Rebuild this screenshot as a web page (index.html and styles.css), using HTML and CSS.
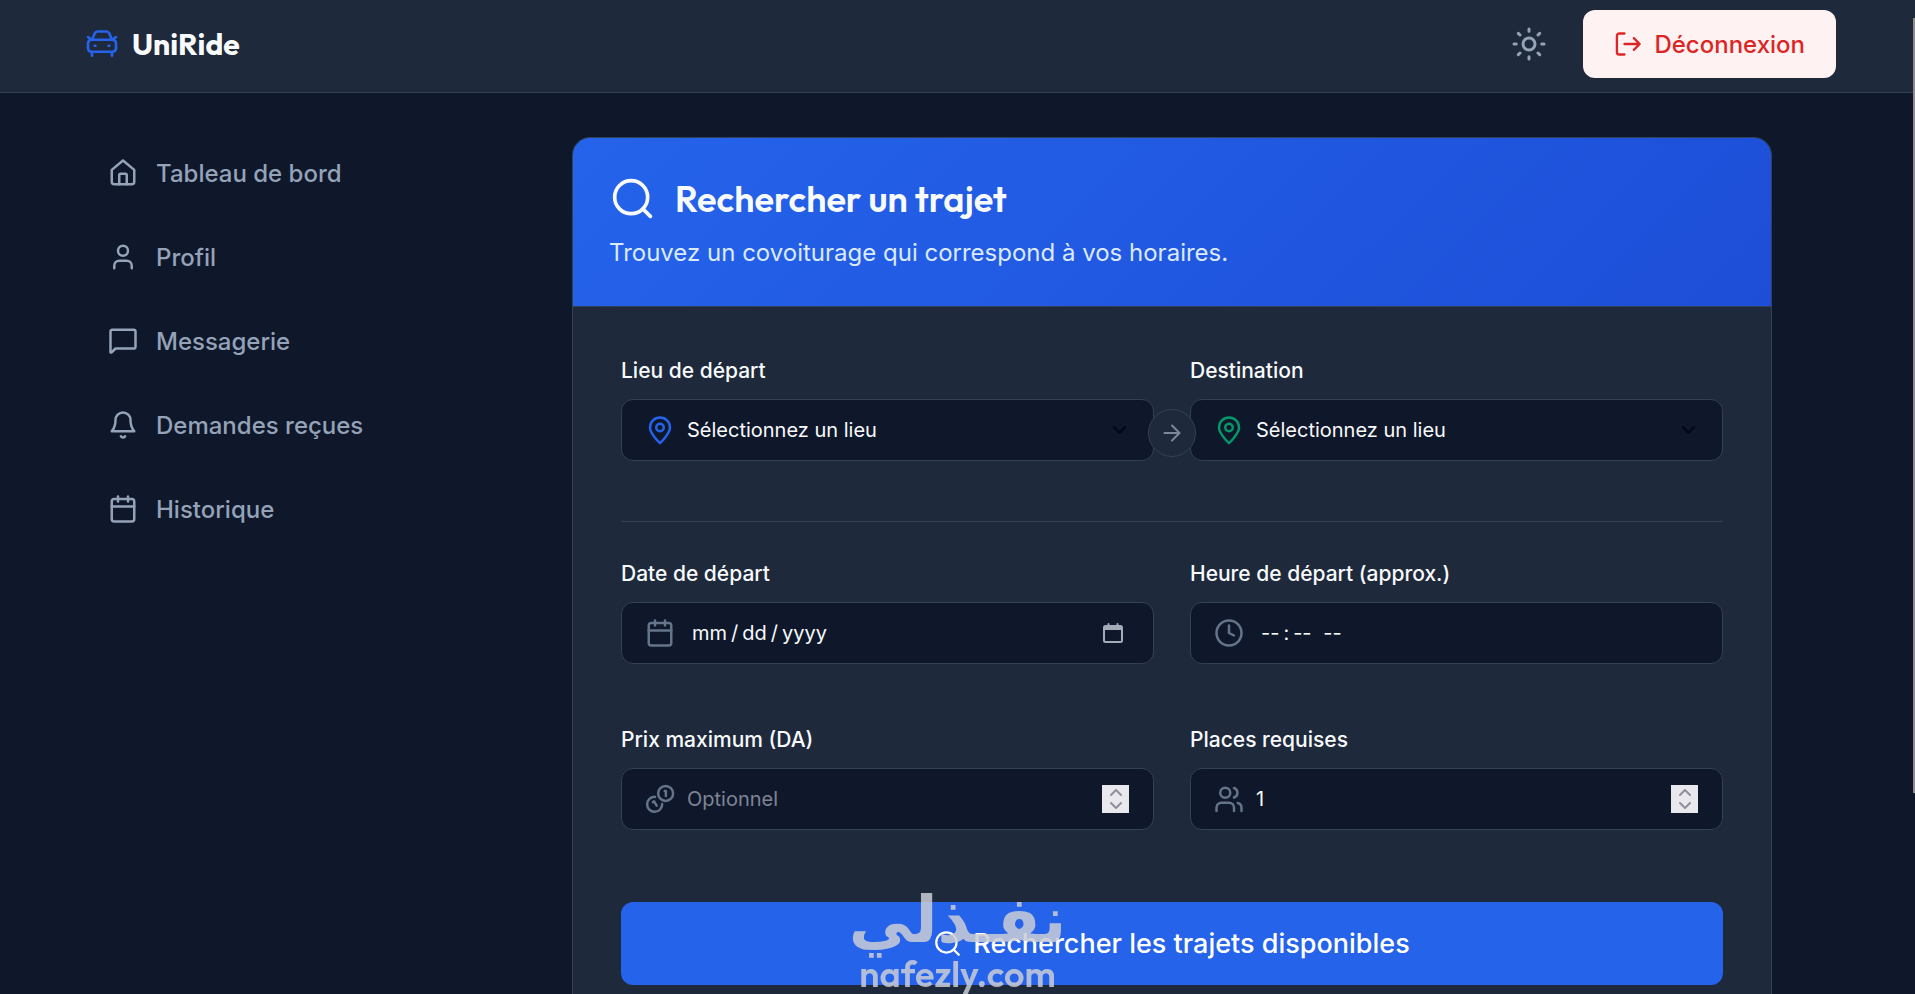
FILE: index.html
```html
<!DOCTYPE html>
<html lang="fr">
<head>
  <meta charset="UTF-8">
  <meta name="viewport" content="width=device-width, initial-scale=1.0">
  <title>UniRide - Rechercher un trajet</title>
  <link rel="stylesheet" href="styles.css">
</head>
<body>
  <header class="navbar">
    <a href="#" class="brand">
      <svg class="icon icon-brand" viewBox="0 0 24 24"><path d="M4.500 8.800 6.600 4Q7.200 2.600 8.600 2.600h6.800q1.400 0 2 1.400l2.100 4.800M1.500 6.800l2.200 1.700M22.500 6.800l-2.200 1.700"/><path d="M4.500 8.800h15q3 0 3 3v3q0 3-3 3h-15q-3 0-3-3v-3q0-3 3-3zM4.500 17.800v3M19.500 17.800v3M6.500 13.300h.6M16.900 13.300h.6"/></svg>
      <span class="brand-name">UniRide</span>
    </a>
    <div class="navbar-actions">
      <button type="button" class="theme-toggle" aria-label="Changer de thème">
        <svg class="icon icon-sun" viewBox="0 0 24 24"><circle cx="12" cy="12" r="4"/><path d="M12 2v1.500M12 20.500v1.500M2 12h1.500M20.500 12h1.500M4.900 4.900 6 6M18 18l1.100 1.100M4.900 19.100 6 18M18 6l1.100-1.100"/></svg>
      </button>
      <button type="button" class="logout">
        <svg class="icon icon-logout" viewBox="0 0 24 24"><path d="M9 21H4.500a2 2 0 0 1-2-2V5a2 2 0 0 1 2-2H9M17 17l5-5-5-5M22 12H9"/></svg>
        Déconnexion
      </button>
    </div>
  </header>

  <div class="layout">
    <nav class="sidebar">
      <a href="#"><svg class="icon" viewBox="0 0 24 24"><path d="M3 9.500 12 2l9 7.500V19a2 2 0 0 1-2 2H5a2 2 0 0 1-2-2z"/><path d="M9 21v-7.500a1 1 0 0 1 1-1h4a1 1 0 0 1 1 1V21"/></svg>Tableau de bord</a>
      <a href="#"><svg class="icon" viewBox="0 0 24 24"><circle cx="12" cy="7" r="4"/><path d="M5 21v-2a4 4 0 0 1 4-4h6a4 4 0 0 1 4 4v2"/></svg>Profil</a>
      <a href="#"><svg class="icon" viewBox="0 0 24 24"><path d="M2 21V4.500A1.500 1.500 0 0 1 3.500 3h17A1.500 1.500 0 0 1 22 4.500v12a1.500 1.500 0 0 1-1.500 1.500H6l-3 3q-.7.500-1 0z"/></svg>Messagerie</a>
      <a href="#"><svg class="icon" viewBox="0 0 24 24"><path d="M18 8A6 6 0 0 0 6 8c0 7-3 8.200-3 9h18c0-.8-3-2-3-9M13.700 21a2 2 0 0 1-3.400 0"/></svg>Demandes reçues</a>
      <a href="#"><svg class="icon" viewBox="0 0 24 24"><rect x="3" y="4" width="18" height="18" rx="2"/><path d="M16 2v4M8 2v4M3 10h18"/></svg>Historique</a>
    </nav>

    <main class="content">
      <section class="card">
        <div class="card-header">
          <h1>
            <svg class="icon icon-title" viewBox="0 0 24 24"><circle cx="11" cy="11" r="9"/><path d="m21.500 21.500-4-4"/></svg>
            Rechercher un trajet
          </h1>
          <p>Trouvez un covoiturage qui correspond à vos horaires.</p>
        </div>

        <form class="search-form">
          <div class="row row-route">
            <div class="group">
              <label for="depart">Lieu de départ</label>
              <div class="field">
                <svg class="icon icon-pin from" viewBox="0 0 24 24"><path d="M20 10c0 5-8 12.500-8 12.500S4 15 4 10a8 8 0 0 1 16 0z"/><circle cx="12" cy="10" r="3"/></svg>
                <select id="depart"><option>Sélectionnez un lieu</option></select>
                <svg class="icon icon-chevron" viewBox="0 0 12 8"><path d="m1 1 5 5 5-5"/></svg>
              </div>
            </div>
            <div class="group">
              <label for="destination">Destination</label>
              <div class="field">
                <svg class="icon icon-pin to" viewBox="0 0 24 24"><path d="M20 10c0 5-8 12.500-8 12.500S4 15 4 10a8 8 0 0 1 16 0z"/><circle cx="12" cy="10" r="3"/></svg>
                <select id="destination"><option>Sélectionnez un lieu</option></select>
                <svg class="icon icon-chevron" viewBox="0 0 12 8"><path d="m1 1 5 5 5-5"/></svg>
              </div>
            </div>
            <span class="route-arrow"><svg class="icon icon-arrow" viewBox="0 0 24 24"><path d="M4.500 12h15M12 4.500l7.500 7.500-7.500 7.500"/></svg></span>
          </div>

          <hr>

          <div class="row">
            <div class="group">
              <label for="date">Date de départ</label>
              <div class="field">
                <svg class="icon" viewBox="0 0 24 24"><rect x="3" y="4" width="18" height="18" rx="2"/><path d="M16 2v4M8 2v4M3 10h18"/></svg>
                <input type="date" id="date" lang="en-US">
                <svg class="icon icon-picker" viewBox="0 0 20 20"><path d="M1 4.500A1.500 1.500 0 0 1 2.500 3h15A1.500 1.500 0 0 1 19 4.500v13a1.500 1.500 0 0 1-1.500 1.500h-15A1.500 1.500 0 0 1 1 17.500zM5.500 1v2M14.500 1v2"/><path d="M1 5h18"/></svg>
              </div>
            </div>
            <div class="group">
              <label for="heure">Heure de départ (approx.)</label>
              <div class="field">
                <svg class="icon" viewBox="0 0 24 24"><circle cx="12" cy="12" r="10"/><path d="M12 6v6l4 2"/></svg>
                <input type="time" id="heure" lang="en-US">
              </div>
            </div>
          </div>

          <div class="row">
            <div class="group">
              <label for="prix">Prix maximum (DA)</label>
              <div class="field">
                <svg class="icon" viewBox="0 0 24 24"><circle cx="16.500" cy="7.500" r="6"/><path d="M8 10.300A6 6 0 1 0 13.700 16M15.800 5.500h.9v4M6.300 14.500l1-.6 2 3.400"/></svg>
                <input type="number" id="prix" placeholder="Optionnel">
                <span class="stepper"><svg class="icon" viewBox="0 0 12 20"><path d="m1 6 5-5 5 5M1 14l5 5 5-5"/></svg></span>
              </div>
            </div>
            <div class="group">
              <label for="places">Places requises</label>
              <div class="field">
                <svg class="icon" viewBox="0 0 24 24"><circle cx="9" cy="7" r="4"/><path d="M2 21.500V19a4 4 0 0 1 4-4h6a4 4 0 0 1 4 4v2.500M22 21.500V19a4 4 0 0 0-3-3.800M16 3.200a4 4 0 0 1 0 7.600"/></svg>
                <input type="number" id="places" value="1" min="1">
                <span class="stepper"><svg class="icon" viewBox="0 0 12 20"><path d="m1 6 5-5 5 5M1 14l5 5 5-5"/></svg></span>
              </div>
            </div>
          </div>

          <button type="submit" class="submit">
            <svg class="icon icon-submit" viewBox="0 0 24 24"><circle cx="11" cy="11" r="9"/><path d="m22 22-4.600-4.600"/></svg>
            Rechercher les trajets disponibles
          </button>
        </form>
      </section>
    </main>
  </div>

  <div class="watermark">
    <span class="watermark-ar" lang="ar" dir="rtl">نفـذلي</span>
    <span class="watermark-en">nafezly.com</span>
  </div>
  <div class="scroll-thumb"></div>
</body>
</html>
```
FILE: styles.css
```css
* {
  box-sizing: border-box;
}
body {
  margin: 0;
  font-family: Inter, sans-serif;
  background: #0f172a;
  color: #f8fafc;
  overflow-x: hidden;
}
a {
  color: inherit;
  text-decoration: none;
}
button, input, select {
  font-family: inherit;
}
.icon {
  flex: none;
  width: 30px;
  height: 30px;
  fill: none;
  stroke: currentColor;
  stroke-width: 2;
  stroke-linecap: round;
  stroke-linejoin: round;
}

/* Top bar */
.navbar {
  display: flex;
  align-items: center;
  justify-content: space-between;
  padding: 10px 79px 14px 86px;
  background: #1e293b;
  border-bottom: 1px solid #334155;
}
.brand {
  display: flex;
  align-items: center;
  gap: 14px;
}
.icon-brand {
  width: 32px;
  height: 32px;
  color: #2563eb;
}
.brand-name {
  font-family: Outfit, Lato, sans-serif;
  font-size: 30px;
  font-weight: 700;
  line-height: 36px;
}
.navbar-actions {
  display: flex;
  align-items: center;
  gap: 36px;
}
.theme-toggle {
  display: flex;
  padding: 0;
  border: 0;
  background: none;
  color: #94a3b8;
}
.icon-sun {
  width: 36px;
  height: 36px;
}
.logout {
  display: flex;
  align-items: center;
  gap: 12px;
  height: 68px;
  padding: 0 31px;
  border: 0;
  border-radius: 12px;
  background: #fef2f2;
  color: #dc2626;
  font-size: 24px;
  font-weight: 500;
}
.icon-logout {
  width: 28px;
  height: 28px;
}

/* Page layout */
.layout {
  display: flex;
}
.sidebar {
  display: flex;
  flex-direction: column;
  gap: 12px;
  width: 429px;
  padding: 44px 36px 36px;
}
.sidebar a {
  display: flex;
  align-items: center;
  gap: 18px;
  height: 72px;
  padding: 0 24px 0 72px;
  color: #94a3b8;
  font-size: 24px;
  font-weight: 500;
}
.content {
  flex: 1;
  padding: 44px 72px 72px;
}
.card {
  max-width: 1200px;
  margin: 0 auto;
  background: #1e293b;
  border: 1px solid #334155;
  border-radius: 18px;
  overflow: hidden;
}
.card-header {
  padding: 37px 36px 35px;
  background: linear-gradient(135deg, #2563eb, #1d4ed8);
  border-bottom: 1px solid #334155;
}
.card-header h1 {
  display: flex;
  align-items: center;
  gap: 20px;
  margin: 0 0 12px;
  padding-left: 2px;
  font-family: Outfit, Lato, sans-serif;
  font-size: 36px;
  font-weight: 600;
  line-height: 48px;
}
.icon-title {
  width: 44px;
  height: 44px;
}
.card-header p {
  margin: 0;
  color: #dbeafe;
  font-size: 24px;
  line-height: 36px;
}

/* Search form */
.search-form {
  padding: 48px;
}
.row {
  display: grid;
  grid-template-columns: 1fr 1fr;
  gap: 36px;
  margin-bottom: 60px;
}
.row-route {
  position: relative;
}
.group {
  display: flex;
  flex-direction: column;
  gap: 12px;
}
.group label {
  font-size: 21px;
  font-weight: 500;
  line-height: 32px;
}
.field {
  display: flex;
  align-items: center;
  gap: 12px;
  height: 62px;
  padding: 0 24px 0 23px;
  background: #0f172a;
  border: 1px solid #334155;
  border-radius: 12px;
  color: #64748b;
}
.field input,
.field select {
  flex: 1;
  min-width: 0;
  height: 100%;
  padding: 0;
  border: 0;
  outline: 0;
  background: none;
  color: #f8fafc;
  font-size: 20px;
  appearance: none;
}
.field input::placeholder {
  color: #7f8594;
}
.field input::-webkit-inner-spin-button,
.field input::-webkit-calendar-picker-indicator {
  display: none;
}
.field input::-webkit-datetime-edit {
  padding-left: 4px;
}
.field input::-webkit-datetime-edit-text {
  padding: 0 3px;
}
.icon-pin.from {
  color: #2563eb;
}
.icon-pin.to {
  color: #059669;
}
.icon-chevron {
  width: 13px;
  height: 9px;
  margin-right: 3px;
  color: #020617;
}
.icon-picker {
  width: 20px;
  height: 20px;
  margin-right: 6px;
  color: #a3aab8;
}
.icon-picker path:last-child {
  stroke-width: 4;
  stroke-linecap: butt;
}
.stepper {
  display: flex;
  align-items: center;
  justify-content: center;
  width: 27px;
  height: 28px;
  background: #e9e9ed;
  color: #8f8f9d;
}
.stepper .icon {
  width: 12px;
  height: 20px;
}
.route-arrow {
  position: absolute;
  top: 54px;
  left: 50%;
  display: flex;
  align-items: center;
  justify-content: center;
  width: 48px;
  height: 48px;
  margin-left: -24px;
  border: 1px solid #334155;
  border-radius: 50%;
  background: #1e293b;
  color: #7c8798;
}
.icon-arrow {
  width: 24px;
  height: 24px;
}
hr {
  margin: 0 0 36px;
  border: 0;
  border-top: 1px solid #334155;
}
.submit {
  display: flex;
  align-items: center;
  justify-content: center;
  gap: 12px;
  width: 100%;
  height: 83px;
  margin-top: 72px;
  border: 0;
  border-radius: 12px;
  background: #2563eb;
  color: #fff;
  font-size: 27px;
  font-weight: 500;
}
.icon-submit {
  width: 27px;
  height: 27px;
}

/* Overlays */
.watermark {
  position: fixed;
  bottom: 0;
  left: 50%;
  display: flex;
  flex-direction: column;
  align-items: center;
  width: 212px;
  margin-left: -106px;
  color: #cbcdd6;
  opacity: .85;
  pointer-events: none;
}
.watermark-ar {
  font-family: "DejaVu Sans", sans-serif;
  font-size: 64px;
  font-weight: bold;
  line-height: 68px;
  white-space: nowrap;
}
.watermark-en {
  font-family: Outfit, Lato, sans-serif;
  font-size: 36px;
  font-weight: 600;
  line-height: 40px;
}
.scroll-thumb {
  position: fixed;
  top: 18px;
  right: 0;
  width: 2px;
  height: 78vh;
  background: #8c8c8c;
}
```
